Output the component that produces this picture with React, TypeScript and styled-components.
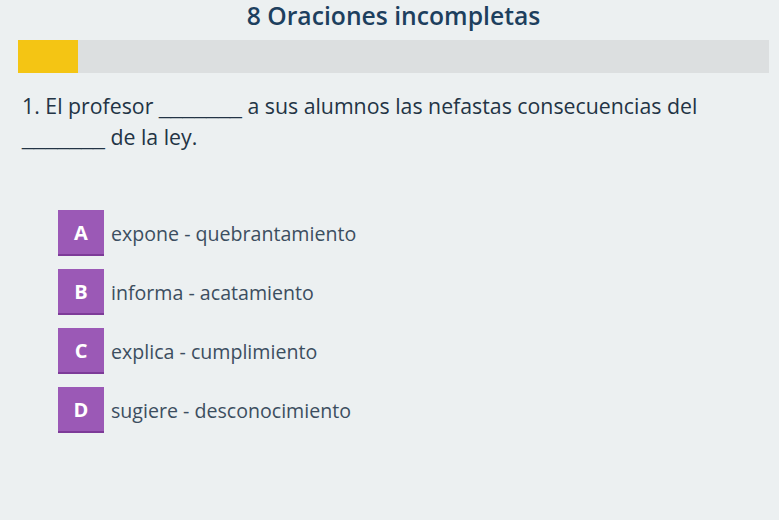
import React from 'react';
import styled, { createGlobalStyle } from 'styled-components';

const GlobalStyle = createGlobalStyle`
  html, body {
    margin: 0;
    padding: 0;
    background: #ecf0f1;
  }
  body {
    font-family: "Open Sans", Lato, sans-serif;
  }
`;

const Page = styled.div`
  width: 779px;
  height: 520px;
  box-sizing: border-box;
  padding: 0 10px 0 18px;
  background: #ecf0f1;
  overflow: hidden;
`;

const Title = styled.h1`
  margin: 0;
  height: 40px;
  text-align: center;
  font-size: 24.7px;
  font-weight: 600;
  line-height: 32px;
  color: #1d3f5e;
`;

const Track = styled.div`
  height: 33px;
  background: #dcdfe0;
`;

const Fill = styled.div`
  height: 100%;
  background: #f4c514;
`;

const Question = styled.p`
  margin: 18px 0 0 4px;
  max-width: 720px;
  font-size: 21.3px;
  line-height: 30px;
  color: #233445;
`;

const Blank = styled.span`
  font-family: "Liberation Sans", Arial, sans-serif;
`;

const Options = styled.ul`
  list-style: none;
  margin: 57px 0 0 40px;
  padding: 0;
  display: flex;
  flex-direction: column;
  gap: 13px;
`;

const Option = styled.li`
  display: flex;
  align-items: center;
  gap: 7px;
`;

const Letter = styled.span`
  width: 46px;
  height: 44px;
  display: flex;
  align-items: center;
  justify-content: center;
  background: #9b59b6;
  border-bottom: 2px solid #7d3b98;
  color: #fff;
  font-size: 20px;
  font-weight: 700;
`;

const Answer = styled.span`
  font-size: 19.6px;
  color: #3c4e60;
`;

const options = [
  ['A', 'expone - quebrantamiento'],
  ['B', 'informa - acatamiento'],
  ['C', 'explica - cumplimiento'],
  ['D', 'sugiere - desconocimiento'],
];

const App = () => {
  const progress = 60 / 751;
  return (
    <Page>
      <GlobalStyle />
      <Title>8 Oraciones incompletas</Title>
      <Track>
        <Fill style={{ width: `${progress * 100}%` }} />
      </Track>
      <Question>
        1. El profesor <Blank>_______</Blank> a sus alumnos las nefastas consecuencias del{' '}
        <Blank>_______</Blank> de la ley.
      </Question>
      <Options>
        {options.map(([letter, text]) => (
          <Option key={letter}>
            <Letter>{letter}</Letter>
            <Answer>{text}</Answer>
          </Option>
        ))}
      </Options>
    </Page>
  );
};

export default App;
